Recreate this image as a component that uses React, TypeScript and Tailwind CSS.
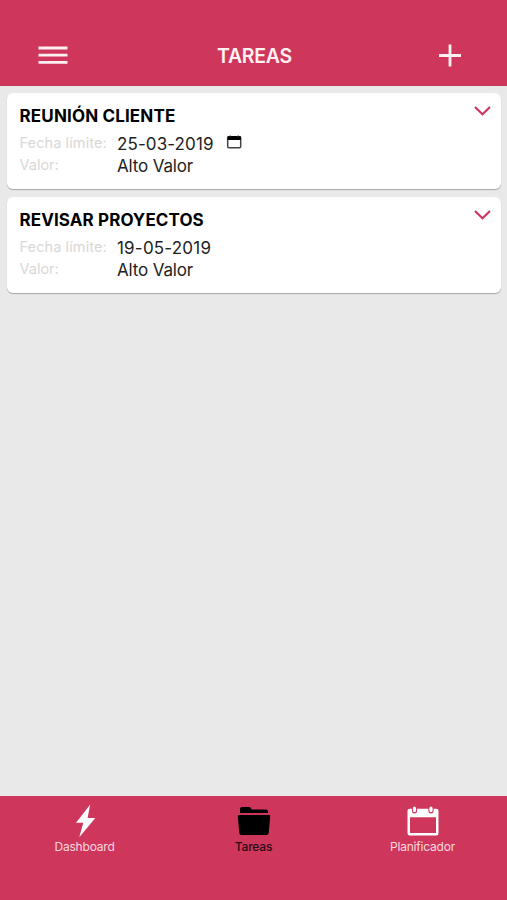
import type { ReactNode } from 'react';

type Task = { title: string; titleClass: string; date: string; dateClass: string; calendar: boolean };

const tasks: Task[] = [
  { title: 'REUNIÓN CLIENTE', titleClass: 'tracking-[0.15px]', date: '25-03-2019', dateClass: 'tracking-[0.1px]', calendar: true },
  { title: 'REVISAR PROYECTOS', titleClass: 'tracking-[0.1px]', date: '19-05-2019', dateClass: 'tracking-[0.2px]', calendar: false },
];

function TaskCard({ task }: { task: Task }) {
  return (
    <article className="flex h-24 justify-between rounded-md bg-white pl-[12.5px] shadow-[0_1px_1px_#a4a4a4]">
      <div>
        <h2 className={`mt-[13px] h-5 whitespace-nowrap text-[17px] font-bold leading-5 text-black ${task.titleClass}`}>
          {task.title}
        </h2>
        <dl className="mt-[7px] grid grid-cols-[97.5px_auto] whitespace-nowrap text-[17px] leading-[22px] text-[#222]">
          <dt className="-mt-px text-[14.5px] tracking-[0.1px] text-[#d8d8d8]">Fecha límite:</dt>
          <dd className="flex">
            <span className={task.dateClass}>{task.date}</span>
            {task.calendar && (
              <svg className="ml-[12.5px] mt-[2px] h-[14px] w-4" viewBox="0 0 16 14">
                <rect x="1.7" y="1.8" width="13" height="11" rx="1.2" fill="none" stroke="#444" strokeWidth="1.5" />
                <path d="M1.500 5V2.200Q1.500 1 2.700 1h11q1.200 0 1.200 1.200V5z" fill="#000" />
                <path d="M3.500.5h1.500v1H3.500zM11.400.5h1.500v1h-1.500z" fill="#555" />
              </svg>
            )}
          </dd>
          <dt className="-mt-px text-[14.5px] text-[#d8d8d8]">Valor:</dt>
          <dd className="tracking-[-0.15px]">Alto Valor</dd>
        </dl>
      </div>
      <svg className="mr-[9px] mt-[12px] h-[11px] w-[19px]" viewBox="0 0 19 11">
        <path d="M2 2 9.500 9.300 17 2" fill="none" stroke="#cb365e" strokeWidth="2.1" />
      </svg>
    </article>
  );
}

function Tab({ label, labelClass, children }: { label: string; labelClass: string; children: ReactNode }) {
  return (
    <div className="flex flex-col items-center pt-2">
      <svg className="h-[34px] w-9 shrink-0" viewBox="0 0 36 34">{children}</svg>
      <span className={`mt-px h-4 text-[12px] leading-4 tracking-[-0.2px] ${labelClass}`}>{label}</span>
    </div>
  );
}

export default function App() {
  return (
    <div className="flex h-[900px] w-[507px] flex-col overflow-hidden bg-[#e9e9e9] font-['Inter','Liberation_Sans',sans-serif]">
      <header className="flex h-[86px] shrink-0 items-start justify-between border-b border-[#c43a5c] bg-[#cf365c] pl-[38px] pr-[46px] pt-[43px]">
        <svg className="h-6 w-[30px]" viewBox="0 0 30 24">
          <path d="M.5 5h29M.5 12.2h29M.5 19.4h29" stroke="#fff0f2" strokeWidth="2.8" />
        </svg>
        <h1 className="ml-[2px] mt-px h-6 text-[19.5px] font-semibold leading-6 tracking-[-0.3px] text-[#fff0f2]">TAREAS</h1>
        <svg className="h-6 w-[22px]" viewBox="0 0 22 24">
          <path d="M0 12.5h22M11 1.5v22" stroke="#fff0f2" strokeWidth="2.8" />
        </svg>
      </header>
      <main className="flex flex-1 flex-col gap-2 pl-[7px] pr-[6px] pt-[7px]">
        {tasks.map((task) => <TaskCard key={task.title} task={task} />)}
      </main>
      <nav className="grid h-[104px] shrink-0 grid-cols-3 bg-[#cf365c]">
        <Tab label="Dashboard" labelClass="text-[#fbd8df]">
          <path d="M23.200 .5 9 18.800h7.300l-4 14.500L28.300 14h-7.700z" fill="#fff" />
        </Tab>
        <Tab label="Tareas" labelClass="text-[#2b0b13] font-medium">
          <path d="M4 9V5q0-2 2-2h7q1.5 0 2 1.3l.6 1.2H30q2 0 2 2V9z" fill="#000" />
          <path d="M3 11h30q1.3 0 1.2 1.3L32.7 29q-.2 2-2 2H5.300q-1.800 0-2-2L1.800 12.300Q1.700 11 3 11z" fill="#000" />
        </Tab>
        <Tab label="Planificador" labelClass="text-[#fbd8df]">
          <path fillRule="evenodd" d="M4.500 4.800h27q2 0 2 2v22.400q0 2.200-2.200 2.200H4.700Q2.500 31.400 2.500 29.200V6.800q0-2 2-2zM5 13.300V28.900h26V13.300z" fill="#fff" />
          <path d="M9.500 4.300v2.500M26 4.300v2.500" stroke="#cf365c" strokeWidth="5.200" strokeLinecap="round" />
          <path d="M9.500 4.200v2.400M26 4.200v2.400" stroke="#fff" strokeWidth="3.200" strokeLinecap="round" />
        </Tab>
      </nav>
    </div>
  );
}
